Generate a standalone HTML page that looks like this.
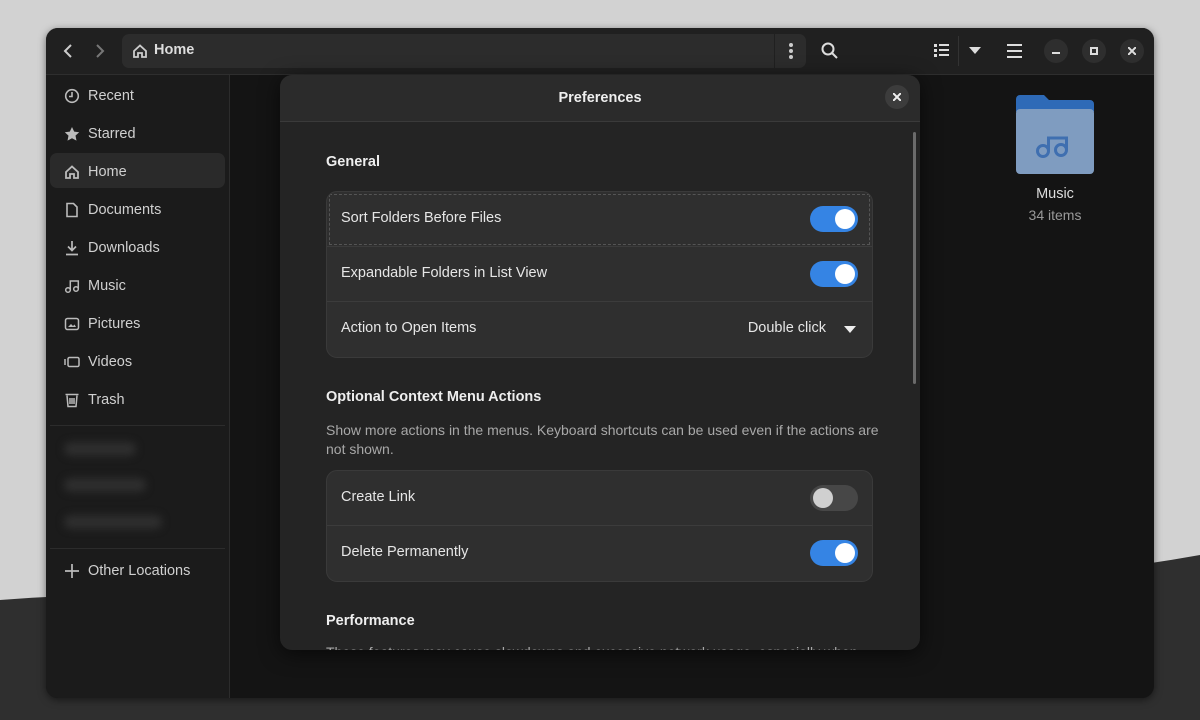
<!DOCTYPE html>
<html><head><meta charset="utf-8"><style>
*{box-sizing:border-box;margin:0;padding:0}
body{width:1200px;height:720px;overflow:hidden;font-family:"Liberation Sans",sans-serif;position:relative;background:#d2d2d2}
.win{position:absolute;left:46px;top:28px;width:1108px;height:670px;background:#141414;border-radius:12px;overflow:hidden;box-shadow:0 2px 8px rgba(0,0,0,.5)}
.hb{position:absolute;left:0;top:0;width:1108px;height:47px;background:#202020;border-bottom:1px solid #2e2e2e}
.side{position:absolute;left:0;top:47px;width:184px;height:623px;background:#1b1b1b;border-right:1px solid #2c2c2c}
.si{position:absolute;left:4px;width:175px;height:35px;color:#d0d0d0;font-size:14.5px;line-height:38px;padding-left:38px}
.si svg{position:absolute;left:14px;top:11px}
.si.act{background:#2a2a2a;border-radius:7px}
.sep{position:absolute;left:4px;width:175px;height:1px;background:#2c2c2c}
.blur{position:absolute;left:18px;height:14px;background:#2e2e2e;border-radius:7px;filter:blur(4px)}
.dlg{position:absolute;left:280px;top:75px;width:640px;height:575px;background:#242424;border-radius:12px;overflow:hidden;box-shadow:0 4px 20px rgba(0,0,0,.6)}
.dh{height:47px;background:#2b2b2b;border-bottom:1px solid #3a3a3a;text-align:center;color:#eee;font-weight:bold;font-size:14.5px;line-height:47px}
.h{position:absolute;left:46px;color:#eee;font-weight:bold;font-size:14.5px}
.box{position:absolute;left:46px;width:547px;background:#2f2f2f;border:1px solid #3a3a3a;border-radius:11px;overflow:hidden}
.row{height:55px;border-bottom:1px solid #3c3c3c;color:#e6e6e6;font-size:14.5px;line-height:53px;padding-left:14px;position:relative}
.row:last-child{border-bottom:none}
.tg{position:absolute;right:14px;top:14px;width:48px;height:26px;border-radius:13px;background:#3584e4}
.tg::after{content:"";position:absolute;right:3px;top:3px;width:20px;height:20px;border-radius:50%;background:#fff}
.tg.off{background:#474747}.tg.off::after{left:3px;right:auto;background:#d0d0d0}
.cb{position:absolute;width:24px;height:24px;border-radius:50%;background:#2e2e2e}
</style></head><body>
<svg style="position:absolute;left:0;top:0" width="1200" height="720"><path d="M0 600 C200 585 400 600 600 600 C800 600 1000 590 1200 555 V720 H0z" fill="#2f2f2f"/></svg>
<div class="win">
 <div class="hb">
  <svg style="position:absolute;left:16px;top:15px" width="12" height="16"><path d="M9 2L3 8l6 6" stroke="#ccc" stroke-width="2" fill="none"/></svg>
  <svg style="position:absolute;left:48px;top:15px" width="12" height="16"><path d="M3 2l6 6-6 6" stroke="#777" stroke-width="2" fill="none"/></svg>
  <div style="position:absolute;left:76px;top:6px;width:684px;height:34px;background:#2c2c2c;border-radius:7px"></div>
  <div style="position:absolute;left:728px;top:6px;width:1px;height:34px;background:#202020"></div>
  <svg style="position:absolute;left:86px;top:15px" width="16" height="16"><path d="M2 8L8 2.5 14 8v6h-4v-4H6v4H2z" stroke="#ccc" stroke-width="1.8" fill="none"/></svg>
  <div style="position:absolute;left:108px;top:14px;color:#ddd;font-weight:bold;font-size:14.5px">Home</div>
  <div style="position:absolute;left:743px;top:15px;width:4px;height:4px;border-radius:2px;background:#ccc;box-shadow:0 6px 0 #ccc,0 12px 0 #ccc"></div>
  <svg style="position:absolute;left:775px;top:14px" width="18" height="18"><circle cx="7" cy="7" r="5.5" stroke="#ddd" stroke-width="2" fill="none"/><path d="M11 11l5 5" stroke="#ddd" stroke-width="2"/></svg>
  <svg style="position:absolute;left:888px;top:16px" width="16" height="14"><g fill="#ddd"><rect x="0" y="0" width="3" height="3"/><rect x="5" y="0" width="10" height="2"/><rect x="0" y="5" width="3" height="3"/><rect x="5" y="5" width="10" height="2"/><rect x="0" y="10" width="3" height="3"/><rect x="5" y="10" width="10" height="2"/></g></svg>
  <div style="position:absolute;left:912px;top:8px;width:1px;height:30px;background:#333"></div>
  <svg style="position:absolute;left:923px;top:19px" width="12" height="8"><path d="M0 0h12L6 7z" fill="#ddd"/></svg>
  <svg style="position:absolute;left:961px;top:16px" width="16" height="14"><g fill="#ddd"><rect y="0" width="15" height="2"/><rect y="6" width="15" height="2"/><rect y="12" width="15" height="2"/></g></svg>
  <div class="cb" style="left:998px;top:11px"></div><div style="position:absolute;left:1006px;top:24px;width:8px;height:2px;background:#ddd"></div>
  <div class="cb" style="left:1036px;top:11px"></div><div style="position:absolute;left:1044px;top:19px;width:8px;height:8px;border:2px solid #ddd"></div>
  <div class="cb" style="left:1074px;top:11px"></div><svg style="position:absolute;left:1082px;top:19px" width="8" height="8"><path d="M0 0l8 8M8 0L0 8" stroke="#ddd" stroke-width="2"/></svg>
 </div>
 <div class="side">
  <div class="si" style="top:2px"><svg width="16" height="16"><circle cx="8" cy="8" r="6.3" stroke="#bbb" stroke-width="1.6" fill="none"/><path d="M8 4v4.5H5" stroke="#bbb" stroke-width="1.6" fill="none"/></svg>Recent</div>
  <div class="si" style="top:40px"><svg width="16" height="16"><path d="M8 1l2.2 4.6 5 .6-3.7 3.4 1 5L8 12.2 3.5 14.6l1-5L.8 6.2l5-.6z" fill="#bbb"/></svg>Starred</div>
  <div class="si act" style="top:78px"><svg width="16" height="16"><path d="M2 8L8 2.5 14 8v6h-4v-4H6v4H2z" stroke="#bbb" stroke-width="1.8" fill="none"/></svg>Home</div>
  <div class="si" style="top:116px"><svg width="16" height="16"><path d="M3 1.5h6.5L13 5v9.5H3z" stroke="#bbb" stroke-width="1.6" fill="none"/></svg>Documents</div>
  <div class="si" style="top:154px"><svg width="16" height="16"><path d="M8 1v9M4 6.5l4 4 4-4M2 14.5h12" stroke="#bbb" stroke-width="1.7" fill="none"/></svg>Downloads</div>
  <div class="si" style="top:192px"><svg width="16" height="16"><circle cx="4" cy="12" r="2.3" stroke="#bbb" stroke-width="1.5" fill="none"/><circle cx="12" cy="11" r="2.3" stroke="#bbb" stroke-width="1.5" fill="none"/><path d="M6.3 12V3h8v8" stroke="#bbb" stroke-width="1.5" fill="none"/></svg>Music</div>
  <div class="si" style="top:230px"><svg width="16" height="16"><rect x="1.5" y="2.5" width="13" height="11" rx="2" stroke="#bbb" stroke-width="1.5" fill="none"/><path d="M4 11l3-3 2 2 1.5-1.5L12 11z" fill="#bbb"/></svg>Pictures</div>
  <div class="si" style="top:268px"><svg width="16" height="16"><rect x="4" y="3.5" width="11" height="9" rx="1.5" stroke="#bbb" stroke-width="1.5" fill="none"/><path d="M1 5v6" stroke="#bbb" stroke-width="1.5"/></svg>Videos</div>
  <div class="si" style="top:306px"><svg width="16" height="16"><path d="M1.5 2.5h13M3 3.5l1 11h8l1-11M6 6v6M8 6v6M10 6v6" stroke="#bbb" stroke-width="1.5" fill="none"/></svg>Trash</div>
  <div class="sep" style="top:350px"></div>
  <div class="blur" style="top:367px;width:72px"></div>
  <div class="blur" style="top:403px;width:82px"></div>
  <div class="blur" style="top:440px;width:98px"></div>
  <div class="sep" style="top:473px"></div>
  <div class="si" style="top:477px"><svg width="16" height="16"><path d="M8 1v14M1 8h14" stroke="#bbb" stroke-width="1.7"/></svg>Other Locations</div>
 </div>
 <svg style="position:absolute;left:970px;top:67px" width="78" height="80"><path d="M0 4a4 4 0 014-4h24l5 5h41a4 4 0 014 4v8H0z" fill="#2e6ab7"/><rect x="0" y="14" width="78" height="65" rx="4" fill="#7f9cc0"/><g stroke="#3f6fb0" stroke-width="3" fill="none"><circle cx="27" cy="56" r="5.5"/><circle cx="45" cy="55" r="5.5"/><path d="M32.5 56V43h18v12"/></g></svg>
 <div style="position:absolute;left:960px;top:158px;width:98px;text-align:center;color:#ddd;font-size:14.5px">Music</div>
 <div style="position:absolute;left:960px;top:179px;width:98px;text-align:center;color:#999;font-size:14px">34 items</div>
</div>
<div class="dlg">
 <div class="dh">Preferences</div>
 <div class="cb" style="left:605px;top:10px;background:#3c3c3c"></div>
 <svg style="position:absolute;left:613px;top:18px" width="8" height="8"><path d="M0 0l8 8M8 0L0 8" stroke="#eee" stroke-width="2"/></svg>
 <div style="position:absolute;left:633px;top:57px;width:3px;height:252px;background:#6a6a6a;border-radius:2px"></div>
 <div class="h" style="top:79px">General</div>
 <div class="box" style="top:116px">
  <div class="row" style="outline:1px dashed #555;outline-offset:-3px">Sort Folders Before Files<div class="tg"></div></div>
  <div class="row">Expandable Folders in List View<div class="tg"></div></div>
  <div class="row">Action to Open Items<span style="position:absolute;right:46px">Double click</span><svg style="position:absolute;right:16px;top:24px" width="12" height="7"><path d="M0 0h12L6 7z" fill="#eee"/></svg></div>
 </div>
 <div class="h" style="top:314px">Optional Context Menu Actions</div>
 <div style="position:absolute;left:46px;top:346px;width:560px;color:#a8a8a8;font-size:14px;line-height:19px">Show more actions in the menus. Keyboard shortcuts can be used even if the actions are not shown.</div>
 <div class="box" style="top:395px">
  <div class="row">Create Link<div class="tg off"></div></div>
  <div class="row">Delete Permanently<div class="tg"></div></div>
 </div>
 <div class="h" style="top:538px">Performance</div>
 <div style="position:absolute;left:46px;top:569px;color:#a8a8a8;font-size:14px">These features may cause slowdowns and excessive network usage, especially when</div>
</div>
</body></html>
